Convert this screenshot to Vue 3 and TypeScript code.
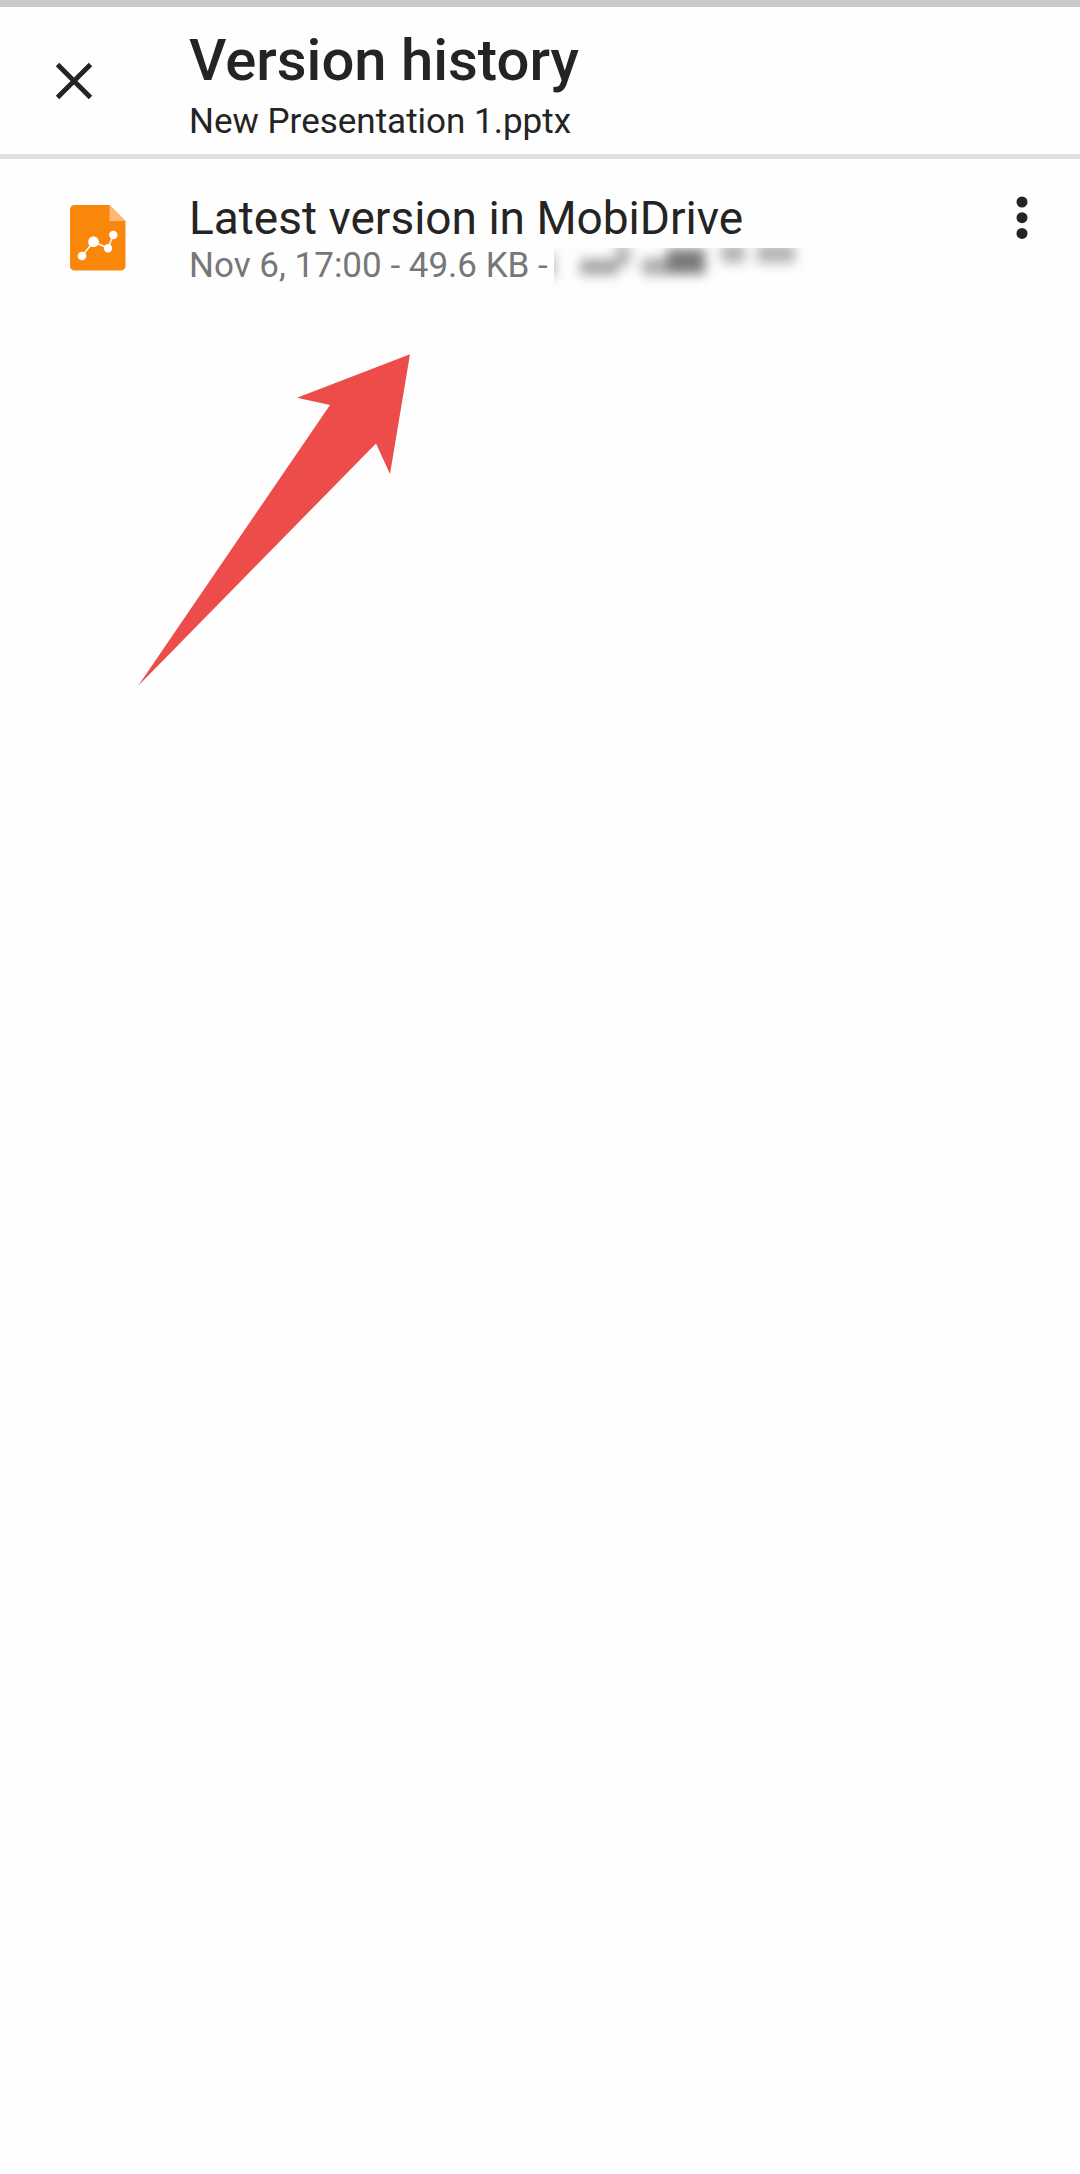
<script setup lang="ts">
import { ref } from 'vue'

interface FileVersion {
  id: number
  title: string
  date: string
  size: string
}

const fileName = ref('New Presentation 1.pptx')
const versions = ref<FileVersion[]>([
  { id: 1, title: 'Latest version in MobiDrive', date: 'Nov 6, 17:00', size: '49.6 KB' },
])
</script>

<template>
  <div class="screen">
    <header class="bar">
      <button class="icon-button close" type="button" aria-label="Close">
        <svg width="38" height="38" viewBox="0 0 38 38" aria-hidden="true">
          <path d="M2.5 2.5 35.5 35.5M35.5 2.5 2.5 35.5" fill="none" stroke="#242424" stroke-width="4.8" />
        </svg>
      </button>
      <div class="heading">
        <h1>Version history</h1>
        <p>{{ fileName }}</p>
      </div>
    </header>

    <main class="content">
      <ul class="versions">
        <li v-for="version in versions" :key="version.id" class="version">
          <svg class="file-icon" width="56" height="66" viewBox="0 0 56 66" aria-hidden="true">
            <path d="M5 0H39.5L55.5 16V60.5Q55.5 65.500 50.500 65.500H5Q0 65.500 0 60.500V5Q0 0 5 0Z" fill="#f8870b" />
            <path d="M39.500 0 55.500 16H39.500Z" fill="#fdb973" />
            <path d="M12 51 23.500 36.700 38 43.300 43.300 30" fill="none" stroke="#fff" stroke-width="1.500" />
            <g fill="#fff">
              <circle cx="12" cy="51" r="4.300" />
              <circle cx="23.500" cy="36.700" r="5.400" />
              <circle cx="38" cy="43.300" r="4.200" />
              <circle cx="43.300" cy="30" r="4.200" />
            </g>
          </svg>
          <div class="details">
            <h2>{{ version.title }}</h2>
            <div class="meta">
              <p>{{ version.date }} - {{ version.size }} -</p>
              <svg class="author" width="270" height="42" viewBox="0 0 270 42" role="img" aria-label="Hidden author">
                <defs>
                  <filter id="soften" filterUnits="userSpaceOnUse" x="-40" y="-40" width="340" height="120" color-interpolation-filters="sRGB">
                    <feGaussianBlur stdDeviation="6" />
                  </filter>
                </defs>
                <g filter="url(#soften)" fill="#6c6c6c">
                  <rect x="-10" y="6" width="11" height="24" opacity=".5" />
                  <rect x="26" y="11" width="38" height="16" opacity=".6" />
                  <rect x="62" y="-4" width="14" height="22" opacity=".5" />
                  <rect x="88" y="10" width="26" height="17" opacity=".55" />
                  <rect x="113" y="1" width="38" height="25" opacity=".9" />
                  <rect x="167" y="-4" width="24" height="19" opacity=".5" />
                  <rect x="203" y="-4" width="38" height="19" opacity=".5" />
                </g>
              </svg>
            </div>
          </div>
          <button class="icon-button more" type="button" aria-label="More options">
            <svg width="12" height="44" viewBox="0 0 12 44" aria-hidden="true">
              <g fill="#242424">
                <circle cx="6" cy="6" r="5.500" />
                <circle cx="6" cy="21.700" r="5.500" />
                <circle cx="6" cy="37.400" r="5.500" />
              </g>
            </svg>
          </button>
        </li>
      </ul>

      <svg class="pointer" width="274" height="334" viewBox="0 0 274 334" aria-hidden="true">
        <path d="M272 0.300 159 43.700 192 51 0 332 238 89.500 252 120Z" fill="#ec4d4b" />
      </svg>
    </main>
  </div>
</template>

<style>
body {
  background: #fefefe;
}
</style>

<style scoped>
.screen {
  min-height: 100vh;
  box-sizing: border-box;
  border-top: 7px solid #c9c9c9;
  background: #fefefe;
  color: #242424;
  font-family: Roboto, "Liberation Sans", sans-serif;
}

h1,
h2,
p,
ul {
  margin: 0;
  padding: 0;
}

.icon-button {
  display: flex;
  justify-content: center;
  padding: 0;
  border: 0;
  background: none;
  cursor: pointer;
}

.bar {
  display: flex;
  align-items: center;
  border-bottom: 5px solid #e1e1e1;
}

.close {
  flex: none;
  width: 74px;
  padding: 18px 0;
  margin: 0 78px 0 37px;
}

.heading {
  flex: 1;
  padding: 19px 0 10px;
}

h1 {
  margin-bottom: 6px;
  font-size: 58px;
  line-height: 68px;
  font-weight: 500;
}

p {
  font-size: 35px;
  line-height: 44px;
}

.content {
  position: relative;
}

.versions {
  list-style: none;
}

.version {
  display: flex;
  align-items: flex-start;
  padding: 33px 21px 24px 70px;
}

.file-icon {
  flex: none;
  margin: 13px 63px 0 0;
}

.details {
  flex: 1;
  min-width: 0;
}

h2 {
  font-size: 46px;
  line-height: 52px;
  font-weight: 400;
}

.meta {
  display: flex;
  align-items: flex-start;
  color: #777;
}

.author {
  flex: none;
  margin: 4px 0 0 6px;
}

.more {
  flex: none;
  width: 74px;
  margin-top: 4px;
}

.pointer {
  position: absolute;
  top: 195px;
  left: 138px;
}
</style>
